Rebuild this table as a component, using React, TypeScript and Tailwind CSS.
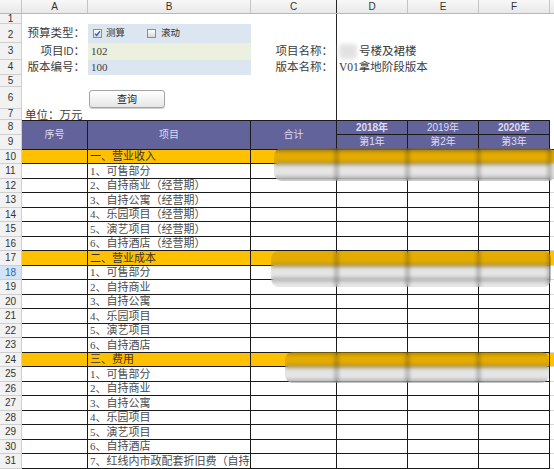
import React from "react";

const serif = "font-['Liberation_Serif','Noto_Sans_CJK_SC',serif]";
const sans = "font-['Liberation_Sans','Noto_Sans_CJK_SC',sans-serif]";

const bodyRows = [
  { n: 10, label: "一、营业收入", section: true },
  { n: 11, label: "1、可售部分" },
  { n: 12, label: "2、自持商业（经营期）" },
  { n: 13, label: "3、自持公寓（经营期）" },
  { n: 14, label: "4、乐园项目（经营期）" },
  { n: 15, label: "5、演艺项目（经营期）" },
  { n: 16, label: "6、自持酒店（经营期）" },
  { n: 17, label: "二、营业成本", section: true },
  { n: 18, label: "1、可售部分" },
  { n: 19, label: "2、自持商业" },
  { n: 20, label: "3、自持公寓" },
  { n: 21, label: "4、乐园项目" },
  { n: 22, label: "5、演艺项目" },
  { n: 23, label: "6、自持酒店" },
  { n: 24, label: "三、费用", section: true },
  { n: 25, label: "1、可售部分" },
  { n: 26, label: "2、自持商业" },
  { n: 27, label: "3、自持公寓" },
  { n: 28, label: "4、乐园项目" },
  { n: 29, label: "5、演艺项目" },
  { n: 30, label: "6、自持酒店" },
  { n: 31, label: "7、红线内市政配套折旧费（自持" },
];

function RowNum({
  n,
  active,
  bottom,
}: {
  n: number;
  active?: boolean;
  bottom?: boolean;
}) {
  return (
    <div
      className={`flex h-full w-[22px] shrink-0 justify-center border-r border-b border-[#cfcfcf] text-[10px] leading-none ${sans} ${
        bottom ? "items-end pb-[2px]" : "items-center"
      } ${active ? "bg-[#d3e4f7] text-[#2b66b0]" : "bg-[#f2f2f2] text-[#333]"}`}
    >
      {n}
    </div>
  );
}

function Checkbox({ checked }: { checked?: boolean }) {
  return (
    <span className="relative inline-block h-[9px] w-[9px] shrink-0 border border-[#8d8d8d] bg-gradient-to-b from-white to-[#d8d8d8]">
      {checked && (
        <svg viewBox="0 0 8 8" className="absolute left-0 top-0 h-[7px] w-[7px]">
          <path d="M1.2 4.2 L3.1 6.2 L6.8 1.4" fill="none" stroke="#2a5fb8" strokeWidth="1.5" />
        </svg>
      )}
    </span>
  );
}

function TopCells({
  a,
  b,
  c,
  d,
  bBg,
}: {
  a?: React.ReactNode;
  b?: React.ReactNode;
  c?: React.ReactNode;
  d?: React.ReactNode;
  bBg?: string;
}) {
  return (
    <>
      <div className={`flex w-[66px] shrink-0 items-center justify-end pr-[3px] text-[11.5px] text-[#3c3c3c] whitespace-nowrap ${serif}`}>
        {a}
      </div>
      <div className={`flex w-[163px] shrink-0 items-center ${bBg ?? ""}`}>{b}</div>
      <div className={`flex w-[86px] shrink-0 items-center justify-end border-r border-[#262626] pr-[3px] text-[11.5px] text-[#3c3c3c] whitespace-nowrap ${serif}`}>
        {c}
      </div>
      <div className={`flex flex-1 items-center pl-[2px] text-[11.5px] text-[#3c3c3c] whitespace-nowrap ${serif}`}>
        {d}
      </div>
    </>
  );
}

function BodyRow({ n, label, section }: { n: number; label: string; section?: boolean }) {
  const h = n % 2 === 0 ? "h-[14px]" : "h-[15px]";
  return (
    <div className={`flex ${h}`}>
      <RowNum n={n} active={n === 18} />
      <div className={`flex flex-1 ${section ? "bg-[#ffc000]" : "bg-white"}`}>
        <div className="w-[66px] shrink-0 border-r border-b border-[#1a1a1a]" />
        <div
          className={`flex w-[163px] shrink-0 items-center overflow-hidden whitespace-nowrap border-r border-b border-[#1a1a1a] pl-[2px] text-[11px] leading-none ${serif} ${
            section ? "text-[#3b3320]" : "text-[#4a4a4a]"
          }`}
        >
          {label}
        </div>
        <div className="w-[86px] shrink-0 border-r border-b border-[#1a1a1a]" />
        <div className="w-[71px] shrink-0 border-r border-b border-[#1a1a1a]" />
        <div className="w-[71px] shrink-0 border-r border-b border-[#1a1a1a]" />
        <div className="w-[71px] shrink-0 border-r border-b border-[#1a1a1a]" />
        <div className="flex-1 border-b border-[#d8d8d8]" />
      </div>
    </div>
  );
}

export default function App() {
  return (
    <div className="relative h-[469px] w-[554px] overflow-hidden bg-white">
      {/* column letters */}
      <div className={`flex h-[14px] border-b border-[#b8b8b8] bg-gradient-to-b from-[#f8f8f8] to-[#e8e8e8] text-[10px] text-[#333] ${sans}`}>
        <div className="w-[22px] shrink-0 border-r border-[#c4c4c4]" />
        <div className="flex w-[66px] shrink-0 items-center justify-center border-r border-[#c4c4c4]">A</div>
        <div className="flex w-[163px] shrink-0 items-center justify-center border-r border-[#c4c4c4]">B</div>
        <div className="flex w-[86px] shrink-0 items-center justify-center border-r border-[#262626]">C</div>
        <div className="flex w-[71px] shrink-0 items-center justify-center border-r border-[#c4c4c4]">D</div>
        <div className="flex w-[71px] shrink-0 items-center justify-center border-r border-[#c4c4c4]">E</div>
        <div className="flex w-[71px] shrink-0 items-center justify-center border-r border-[#c4c4c4]">F</div>
        <div className="flex-1" />
      </div>

      {/* rows 1 - 7 */}
      <div className="flex h-[10px]">
        <RowNum n={1} />
        <TopCells />
      </div>
      <div className="flex h-[19px]">
        <RowNum n={2} bottom />
        <TopCells
          a="预算类型："
          bBg="bg-[#dce6f1]"
          b={
            <div className={`flex items-center text-[9.5px] text-[#333] ${sans}`}>
              <span className="ml-[5px] flex"><Checkbox checked /></span>
              <span className="ml-[4px]">测算</span>
              <span className="ml-[22px] flex"><Checkbox /></span>
              <span className="ml-[5px]">滚动</span>
            </div>
          }
        />
      </div>
      <div className="flex h-[17px]">
        <RowNum n={3} />
        <TopCells
          a={
            <>
              项目<span className={`text-[10px] ${sans}`}>ID</span>：
            </>
          }
          bBg="bg-[#ebf1de]"
          b={<span className={`pl-[3px] text-[11px] text-[#3c3c3c] ${serif}`}>102</span>}
          c="项目名称："
          d={
            <>
              <span className="mr-[2px] inline-block h-[15px] w-[18px] rounded-sm bg-[#e2e2e2] blur-[2px]" />
              号楼及裙楼
            </>
          }
        />
      </div>
      <div className="flex h-[15px]">
        <RowNum n={4} />
        <TopCells
          a="版本编号："
          bBg="bg-[#dce6f1]"
          b={<span className={`pl-[3px] text-[11px] text-[#3c3c3c] ${serif}`}>100</span>}
          c="版本名称："
          d="V01拿地阶段版本"
        />
      </div>
      <div className="flex h-[12px]">
        <RowNum n={5} />
        <TopCells />
      </div>
      <div className="flex h-[22px]">
        <RowNum n={6} />
        <TopCells
          b={
            <button
              className={`ml-[1px] mt-[2px] flex h-[18px] w-[76px] items-center justify-center rounded-[3px] border border-[#a3a3a3] bg-gradient-to-b from-white to-[#e6e6e6] text-[10px] text-[#222] shadow-[0_1px_0_#d0d0d0] ${sans}`}
            >
              查询
            </button>
          }
        />
      </div>
      <div className="flex h-[11px]">
        <RowNum n={7} />
        <div className="relative flex flex-1">
          <div className={`absolute left-[3px] top-[-2px] whitespace-nowrap text-[11.5px] text-[#3c3c3c] ${serif}`}>
            单位：万元
          </div>
          <div className="w-[315px] shrink-0 border-r border-[#262626]" />
        </div>
      </div>

      {/* header rows 8 - 9 */}
      <div className="flex h-[30px]">
        <div className="flex w-[22px] shrink-0 flex-col">
          <div className="h-[15px]"><RowNum n={8} /></div>
          <div className="h-[15px]"><RowNum n={9} /></div>
        </div>
        <div className={`flex flex-1 text-[10px] leading-none text-[#dedcf2] ${sans}`}>
          <div className="flex w-[66px] shrink-0 items-center justify-center border-t border-r border-b border-[#1a1a1a] bg-[#63639b]">序号</div>
          <div className="flex w-[163px] shrink-0 items-center justify-center border-t border-r border-b border-[#1a1a1a] bg-[#63639b]">项目</div>
          <div className="flex w-[86px] shrink-0 items-center justify-center border-t border-r border-b border-[#1a1a1a] bg-[#63639b]">合计</div>
          {[
            ["2018年", "第1年", true],
            ["2019年", "第2年", false],
            ["2020年", "第3年", true],
          ].map(([y, n, bold]) => (
            <div key={y as string} className="flex w-[71px] shrink-0 flex-col border-t border-r border-[#1a1a1a] bg-[#63639b]">
              <div className={`flex h-[14px] items-center justify-center border-b border-[#1a1a1a] ${bold ? "font-bold" : ""}`}>{y}</div>
              <div className="flex h-[15px] items-center justify-center border-b border-[#1a1a1a]">{n}</div>
            </div>
          ))}
          <div className="flex-1 border-b border-[#1a1a1a]" />
        </div>
      </div>

      {/* body rows */}
      {bodyRows.map((r) => (
        <BodyRow key={r.n} n={r.n} label={r.label} section={r.section} />
      ))}

      {/* redacted figures */}
      <div className="absolute left-[274px] top-[148px] h-[33px] w-[282px] rounded-[8px] bg-black/10 backdrop-blur-[2px]" />
      <div className="absolute left-[271px] top-[251px] h-[36px] w-[280px] rounded-[8px] bg-black/10 backdrop-blur-[2px]" />
      <div className="absolute left-[285px] top-[352px] h-[31px] w-[264px] rounded-[8px] bg-black/10 backdrop-blur-[2px]" />
    </div>
  );
}
